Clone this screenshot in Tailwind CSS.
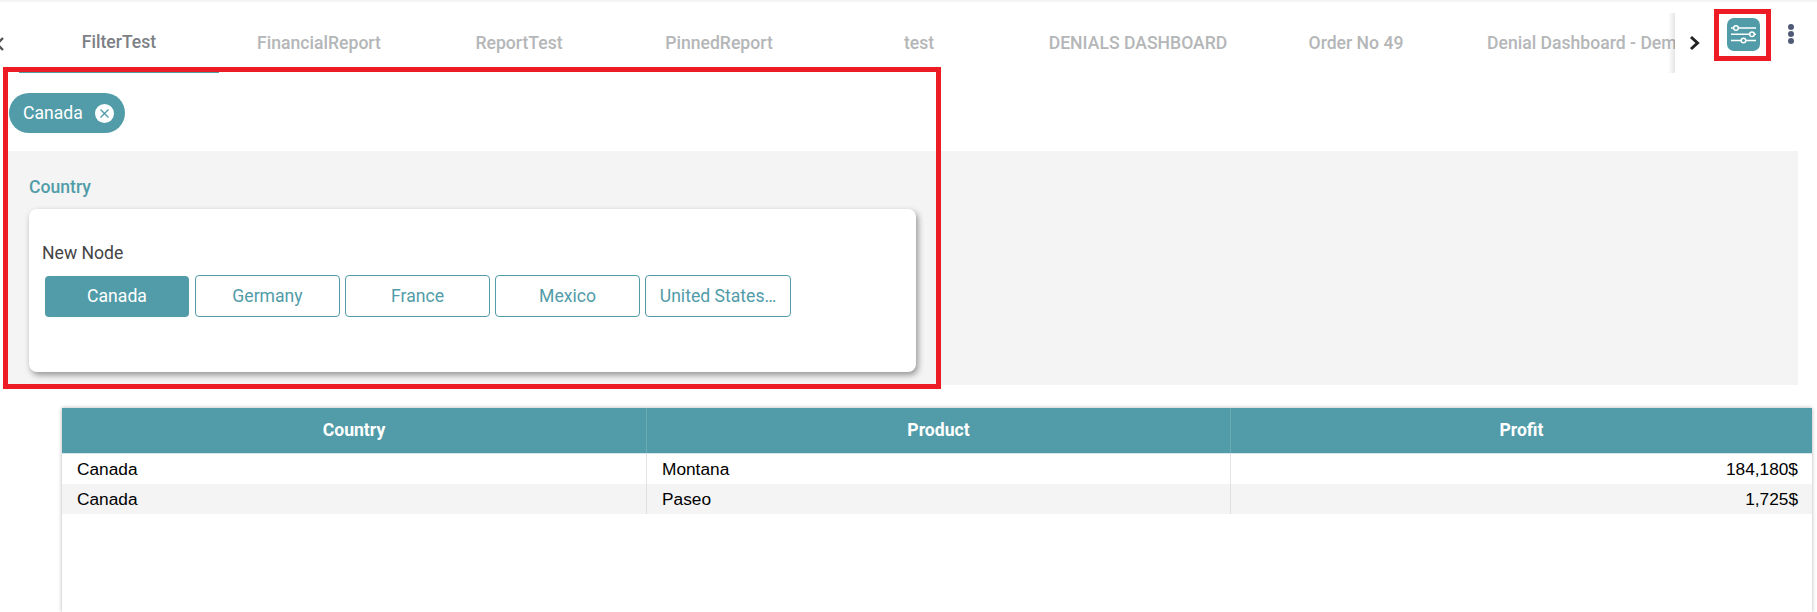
<!DOCTYPE html>
<html><head><meta charset="utf-8"><script src="https://cdn.jsdelivr.net/npm/@tailwindcss/browser@4"></script></head>
<body class="bg-white">
<div class="relative w-[1817px] h-[612px] overflow-hidden bg-white font-['Roboto',sans-serif] flex flex-col">
  <div class="h-[3px] bg-gradient-to-b from-[#f0f0f0] to-white shrink-0"></div>
  <div class="flex h-[70px] shrink-0">
    <div class="w-[19px] shrink-0 overflow-hidden pt-[32px]">
      <svg class="-ml-[8px]" width="14" height="18" viewBox="0 0 14 18" fill="none"><path d="M11 3 5 9l6 6" stroke="#555" stroke-width="2.4"/></svg>
    </div>
    <div class="w-[1656px] shrink-0 flex overflow-hidden text-[17.6px] font-medium text-[#b4b6b8] leading-6">
      <div class="w-[200px] shrink-0 text-center pt-[27px] border-b-2 border-[#519ca8] text-[#7d8085]">FilterTest</div>
      <div class="w-[200px] shrink-0 text-center pt-[28px]">FinancialReport</div>
      <div class="w-[200px] shrink-0 text-center pt-[28px]">ReportTest</div>
      <div class="w-[200px] shrink-0 text-center pt-[28px]">PinnedReport</div>
      <div class="w-[200px] shrink-0 text-center pt-[28px]">test</div>
      <div class="w-[238px] shrink-0 text-center pt-[28px]">DENIALS DASHBOARD</div>
      <div class="w-[198px] shrink-0 text-center pt-[28px]">Order No 49</div>
      <div class="w-[220px] shrink-0 pt-[28px] pl-[32px] whitespace-nowrap">Denial Dashboard - Demo</div>
    </div>
    <div class="relative w-[39px] shrink-0 h-[60px] mt-[10px] flex items-center pl-[14px] bg-white">
      <div class="absolute -left-[7px] top-0 w-[7px] h-full bg-gradient-to-l from-black/10 to-transparent"></div>
      <svg width="12" height="16" viewBox="0 0 12 16" fill="none"><path d="M2 2 8.500 8l-6.500 6" stroke="#222" stroke-width="3"/></svg>
    </div>
    <div class="w-[13px] shrink-0"></div>
    <div class="w-[33px] h-[33px] mt-[15px] shrink-0 rounded-[7px] bg-[#519ca8]">
      <svg width="33" height="33" viewBox="0 0 33 33" fill="none">
        <path d="M4 10h25M4 16.300h25M4 22.500h25" stroke="#fff" stroke-width="1.500"/>
        <circle cx="9" cy="10" r="2.300" fill="#519ca8" stroke="#fff" stroke-width="1.500"/>
        <circle cx="25" cy="16.300" r="2.300" fill="#519ca8" stroke="#fff" stroke-width="1.500"/>
        <circle cx="16.500" cy="22.500" r="2.300" fill="#519ca8" stroke="#fff" stroke-width="1.500"/>
      </svg>
    </div>
    <div class="ml-[28px] mt-[21px] flex flex-col gap-[1.500px] shrink-0">
      <div class="w-[5.500px] h-[5.500px] rounded-full bg-[#4f5b76]"></div>
      <div class="w-[5.500px] h-[5.500px] rounded-full bg-[#4f5b76]"></div>
      <div class="w-[5.500px] h-[5.500px] rounded-full bg-[#4f5b76]"></div>
    </div>
  </div>
  <div class="h-[78px] shrink-0 pt-[20px] pl-[9px]">
    <div class="w-[116px] h-[40px] rounded-[20px] bg-[#519ca8] flex items-center pl-[14px] text-white text-[17.6px] gap-[12px]">
      <span>Canada</span>
      <svg width="19" height="19" viewBox="0 0 19 19" fill="none"><circle cx="9.500" cy="9.500" r="9.500" fill="#fff"/><path d="M5.500 5.500l8 8M13.500 5.500l-8 8" stroke="#519ca8" stroke-width="1.400"/></svg>
    </div>
  </div>
  <div class="ml-[8px] w-[1790px] h-[234px] shrink-0 bg-[#f4f4f4] pt-[24px] pl-[21px]">
    <div class="text-[17.6px] font-medium text-[#519ca8] leading-6">Country</div>
    <div class="mt-[10px] w-[887px] h-[163px] bg-white rounded-[8px] shadow-[2px_3px_6px_rgba(0,0,0,0.4)] pt-[32px] pl-[13px]">
      <div class="text-[17.6px] text-[#444] leading-6">New Node</div>
      <div class="mt-[11px] ml-[3px] flex gap-[5px] text-[17.6px] text-[#519ca8]">
        <div class="w-[144px] h-[41px] mr-[1px] rounded-[4px] bg-[#519ca8] text-white flex items-center justify-center">Canada</div>
        <div class="w-[145px] h-[42px] -mt-[1px] rounded-[4px] border border-[#519ca8] flex items-center justify-center">Germany</div>
        <div class="w-[145px] h-[42px] -mt-[1px] rounded-[4px] border border-[#519ca8] flex items-center justify-center">France</div>
        <div class="w-[145px] h-[42px] -mt-[1px] rounded-[4px] border border-[#519ca8] flex items-center justify-center">Mexico</div>
        <div class="w-[146px] h-[42px] -mt-[1px] rounded-[4px] border border-[#519ca8] flex items-center justify-center">United States…</div>
      </div>
    </div>
  </div>
  <div class="ml-[62px] mt-[23px] w-[1750px] flex-1 bg-white shadow-[0_0_4px_rgba(0,0,0,0.3)]">
    <div class="grid grid-cols-[585px_584px_1fr] h-[46px] bg-[#519ca8] text-white font-bold text-[17.6px] border-b border-[#d5e6e9]">
      <div class="flex items-center justify-center border-r border-[#6aabb5]">Country</div>
      <div class="flex items-center justify-center border-r border-[#6aabb5]">Product</div>
      <div class="flex items-center justify-center">Profit</div>
    </div>
    <div class="font-['Liberation_Sans',sans-serif] text-[17.3px] text-black">
      <div class="grid grid-cols-[585px_584px_1fr] h-[30px] items-stretch leading-[30px]">
        <div class="pl-[15px] border-r border-[#e4e4e4]">Canada</div>
        <div class="pl-[15px] border-r border-[#e4e4e4]">Montana</div>
        <div class="pr-[14px] text-right">184,180$</div>
      </div>
      <div class="grid grid-cols-[585px_584px_1fr] h-[30px] items-stretch leading-[30px] bg-[#f4f4f4]">
        <div class="pl-[15px] border-r border-[#e0e0e0]">Canada</div>
        <div class="pl-[15px] border-r border-[#e0e0e0]">Paseo</div>
        <div class="pr-[14px] text-right">1,725$</div>
      </div>
    </div>
  </div>
  <div class="absolute left-[3px] top-[67px] w-[938px] h-[322px] border-[5px] border-[#ed1c24] pointer-events-none"></div>
  <div class="absolute left-[1714px] top-[9px] w-[57px] h-[52px] border-[5px] border-[#ed1c24] pointer-events-none"></div>
</div>
</body></html>
